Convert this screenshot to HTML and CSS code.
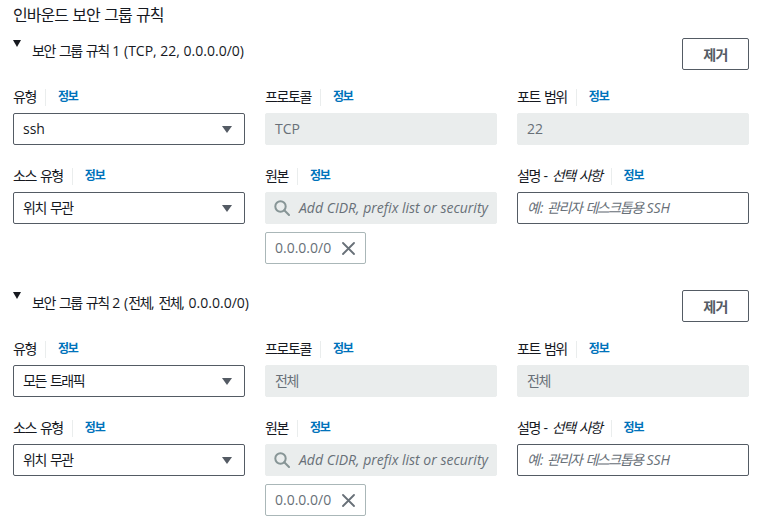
FILE: index.html
```html
<!DOCTYPE html>
<html lang="ko">
<head>
<meta charset="utf-8">
<title>인바운드 보안 그룹 규칙</title>
<link rel="stylesheet" href="styles.css">
</head>
<body>
<div class="page">
  <h2 class="title ko">인바운드 보안 그룹 규칙</h2>

  <section class="rule">
    <div class="rule-head">
      <div class="toggle">
        <svg class="tri" width="8" height="7" viewBox="0 0 8 7"><polygon points="0,0 8,0 4,7" fill="#16191f"/></svg>
        <span class="toggle-text"><span class="ko">보안 그룹 규칙</span> 1 (TCP, 22, 0.0.0.0/0)</span>
      </div>
      <button class="btn ko">제거</button>
    </div>
    <div class="grid">
      <div class="field">
        <div class="label"><span class="label-text ko">유형</span><span class="sep"></span><a class="info ko">정보</a></div>
        <div class="select"><span>ssh</span><svg class="caret" width="10" height="7" viewBox="0 0 10 7"><polygon points="0,0 10,0 5,7" fill="#545b64"/></svg></div>
      </div>
      <div class="field">
        <div class="label"><span class="label-text ko">프로토콜</span><span class="sep"></span><a class="info ko">정보</a></div>
        <div class="input disabled">TCP</div>
      </div>
      <div class="field">
        <div class="label"><span class="label-text ko">포트 범위</span><span class="sep"></span><a class="info ko">정보</a></div>
        <div class="input disabled">22</div>
      </div>
      <div class="field">
        <div class="label"><span class="label-text ko">소스 유형</span><span class="sep"></span><a class="info ko">정보</a></div>
        <div class="select"><span class="ko">위치 무관</span><svg class="caret" width="10" height="7" viewBox="0 0 10 7"><polygon points="0,0 10,0 5,7" fill="#545b64"/></svg></div>
      </div>
      <div class="field">
        <div class="label"><span class="label-text ko">원본</span><span class="sep"></span><a class="info ko">정보</a></div>
        <div class="input search">
          <svg class="search-icon" width="16" height="16" viewBox="0 0 16 16"><circle cx="6.5" cy="6.5" r="5.2" fill="none" stroke="#879596" stroke-width="2"/><line x1="10.3" y1="10.3" x2="15" y2="15" stroke="#879596" stroke-width="2" stroke-linecap="round"/></svg>
          <span class="placeholder">Add CIDR, prefix list or security</span>
        </div>
        <div class="token"><span>0.0.0.0/0</span><svg class="x" width="13" height="13" viewBox="0 0 13 13"><path d="M1 1L12 12M12 1L1 12" stroke="#687078" stroke-width="1.8" stroke-linecap="round"/></svg></div>
      </div>
      <div class="field">
        <div class="label"><span class="label-text"><span class="ko">설명</span> - <i class="ko">선택 사항</i></span><span class="sep"></span><a class="info ko">정보</a></div>
        <div class="input"><span class="placeholder">예: <span class="ko">관리자 데스크톱용</span> SSH</span></div>
      </div>
    </div>
  </section>

  <section class="rule">
    <div class="rule-head">
      <div class="toggle">
        <svg class="tri" width="8" height="7" viewBox="0 0 8 7"><polygon points="0,0 8,0 4,7" fill="#16191f"/></svg>
        <span class="toggle-text"><span class="ko">보안 그룹 규칙</span> 2 (<span class="ko">전체</span>, <span class="ko">전체</span>, 0.0.0.0/0)</span>
      </div>
      <button class="btn ko">제거</button>
    </div>
    <div class="grid">
      <div class="field">
        <div class="label"><span class="label-text ko">유형</span><span class="sep"></span><a class="info ko">정보</a></div>
        <div class="select"><span class="ko">모든 트래픽</span><svg class="caret" width="10" height="7" viewBox="0 0 10 7"><polygon points="0,0 10,0 5,7" fill="#545b64"/></svg></div>
      </div>
      <div class="field">
        <div class="label"><span class="label-text ko">프로토콜</span><span class="sep"></span><a class="info ko">정보</a></div>
        <div class="input disabled"><span class="ko">전체</span></div>
      </div>
      <div class="field">
        <div class="label"><span class="label-text ko">포트 범위</span><span class="sep"></span><a class="info ko">정보</a></div>
        <div class="input disabled"><span class="ko">전체</span></div>
      </div>
      <div class="field">
        <div class="label"><span class="label-text ko">소스 유형</span><span class="sep"></span><a class="info ko">정보</a></div>
        <div class="select"><span class="ko">위치 무관</span><svg class="caret" width="10" height="7" viewBox="0 0 10 7"><polygon points="0,0 10,0 5,7" fill="#545b64"/></svg></div>
      </div>
      <div class="field">
        <div class="label"><span class="label-text ko">원본</span><span class="sep"></span><a class="info ko">정보</a></div>
        <div class="input search">
          <svg class="search-icon" width="16" height="16" viewBox="0 0 16 16"><circle cx="6.5" cy="6.5" r="5.2" fill="none" stroke="#879596" stroke-width="2"/><line x1="10.3" y1="10.3" x2="15" y2="15" stroke="#879596" stroke-width="2" stroke-linecap="round"/></svg>
          <span class="placeholder">Add CIDR, prefix list or security</span>
        </div>
        <div class="token"><span>0.0.0.0/0</span><svg class="x" width="13" height="13" viewBox="0 0 13 13"><path d="M1 1L12 12M12 1L1 12" stroke="#687078" stroke-width="1.8" stroke-linecap="round"/></svg></div>
      </div>
      <div class="field">
        <div class="label"><span class="label-text"><span class="ko">설명</span> - <i class="ko">선택 사항</i></span><span class="sep"></span><a class="info ko">정보</a></div>
        <div class="input"><span class="placeholder">예: <span class="ko">관리자 데스크톱용</span> SSH</span></div>
      </div>
    </div>
  </section>
</div>
</body>
</html>
```

FILE: styles.css
```css
* { box-sizing: border-box; }
html, body { margin: 0; padding: 0; background: #ffffff; }
body {
  font-family: "Open Sans", "Noto Sans CJK KR", sans-serif;
  font-size: 14px;
  line-height: 22px;
  color: #16191f;
}
.ko { letter-spacing: -0.1em; word-spacing: 0.12em; }
.page {
  padding: 4px 15px 0 13px;
}
.title {
  margin: 0;
  font-size: 16px;
  line-height: 22px;
  font-weight: 400;
}
.title.ko { letter-spacing: -0.06em; word-spacing: 0.07em; }
.rule { margin-top: 12px; }
.rule + .rule { margin-top: 26px; }
.rule-head {
  display: flex;
  justify-content: space-between;
  align-items: flex-start;
}
.toggle {
  display: flex;
  align-items: flex-start;
  padding-top: 2px;
}
.tri { margin-top: 0; margin-right: 11px; display: block; }
.toggle-text { font-size: 14px; }
.btn {
  width: 67px;
  height: 32px;
  border: 1px solid #545b64;
  border-radius: 2px;
  background: #fff;
  color: #545b64;
  font-family: "Open Sans", "Noto Sans CJK KR", sans-serif;
  font-size: 14px;
  font-weight: 700;
  padding: 0;
}
.btn.ko { letter-spacing: -0.05em; }
.grid {
  margin-top: 16px;
  display: grid;
  grid-template-columns: repeat(3, 1fr);
  column-gap: 20px;
  row-gap: 20px;
}
.label {
  display: flex;
  align-items: center;
  height: 22px;
  margin-bottom: 5px;
}
.label i { font-style: italic; }
.sep {
  width: 1px;
  height: 17px;
  background: #eaeded;
  margin: 0 12px 0 9px;
}
.info {
  color: #0073bb;
  font-size: 12px;
  font-weight: 700;
}
.select, .input {
  height: 32px;
  border: 1px solid #545b64;
  border-radius: 2px;
  display: flex;
  align-items: center;
  padding: 0 12px 0 9px;
  white-space: nowrap;
  overflow: hidden;
}
.select { justify-content: space-between; }
.caret { display: block; margin-right: 0; }
.input.disabled {
  background: #eaeded;
  border-color: #eaeded;
  color: #687078;
}
.input.search {
  background: #eaeded;
  border-color: #eaeded;
  padding-left: 8px;
  padding-right: 8px;
}
.search-icon { flex: none; margin-right: 9px; }
.placeholder {
  color: #687078;
  font-style: italic;
}
.token {
  margin-top: 8px;
  width: 101px;
  height: 32px;
  border: 1px solid #aab7b8;
  border-radius: 2px;
  display: flex;
  align-items: center;
  padding: 0 0 0 9px;
  color: #687078;
}
.token .x { margin-left: 11px; display: block; }
```
